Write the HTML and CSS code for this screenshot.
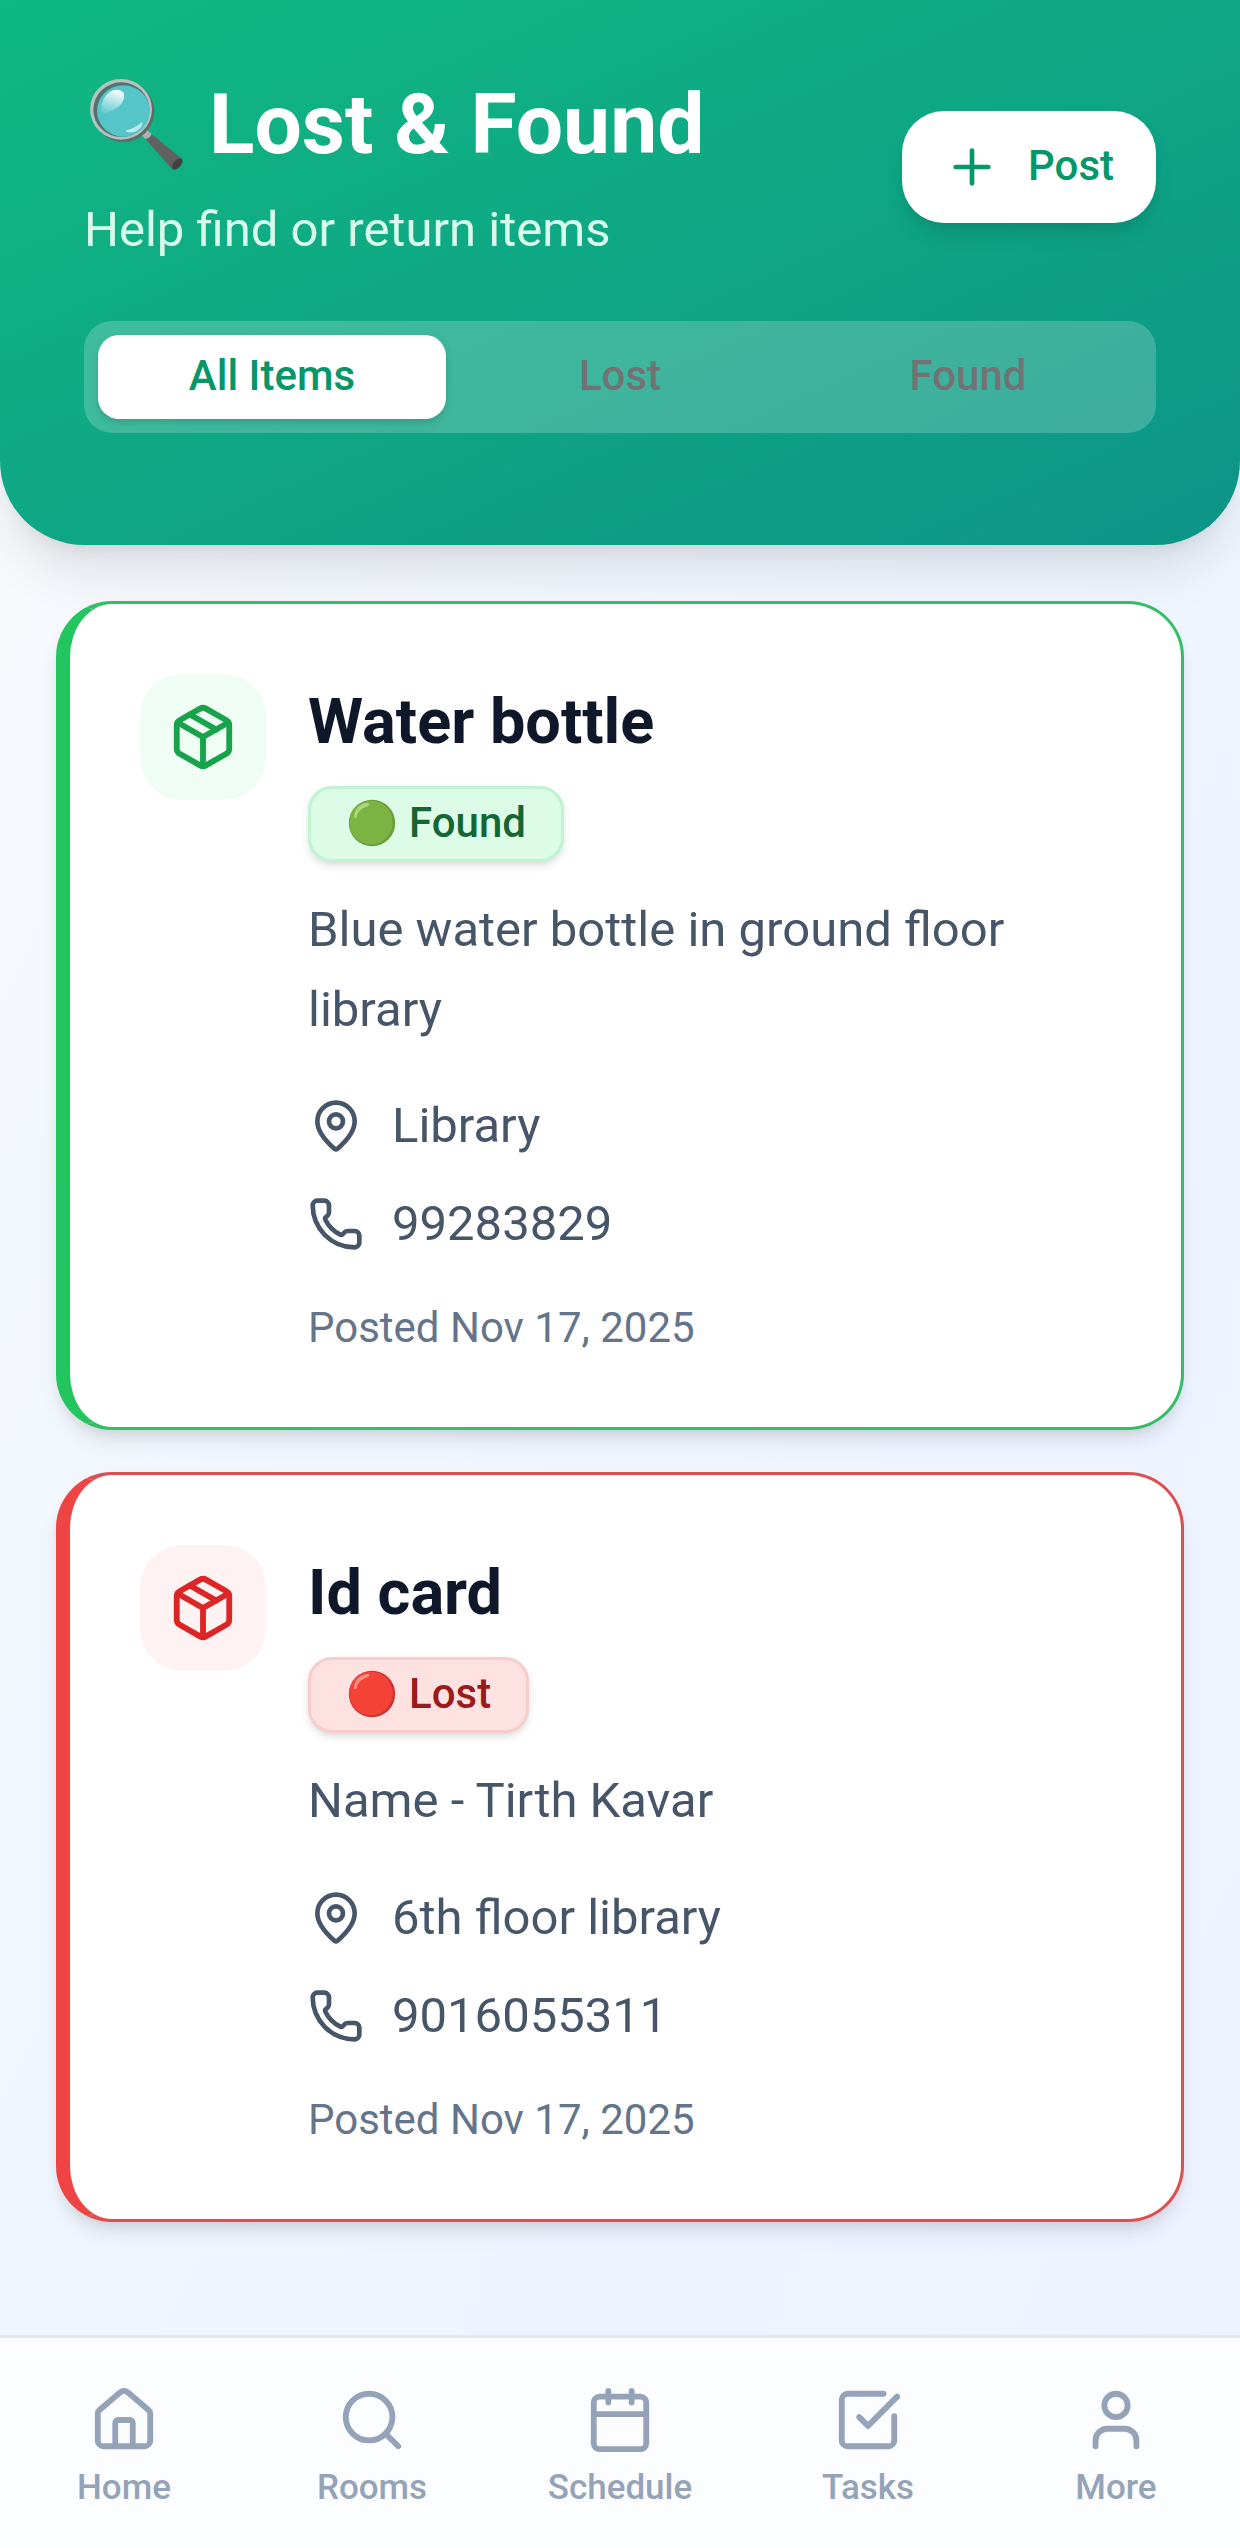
FILE: index.html
```html
<!DOCTYPE html>
<html lang="en">
<head>
<meta charset="utf-8">
<title>Lost &amp; Found</title>
<link rel="stylesheet" href="styles.css">
</head>
<body>
<svg class="sprite" aria-hidden="true">
  <symbol id="package" viewBox="0 0 24 24"><path d="M11 21.73a2 2 0 0 0 2 0l7-4A2 2 0 0 0 21 16V8a2 2 0 0 0-1-1.73l-7-4a2 2 0 0 0-2 0l-7 4A2 2 0 0 0 3 8v8a2 2 0 0 0 1 1.73z"/><path d="M12 22V12"/><path d="M3.29 7 12 12l8.71-5"/><path d="m7.5 4.27 9 5.15"/></symbol>
  <symbol id="pin" viewBox="0 0 24 24"><path d="M20 10c0 4.993-5.539 10.193-7.399 11.799a1 1 0 0 1-1.202 0C9.539 20.193 4 14.993 4 10a8 8 0 0 1 16 0"/><circle cx="12" cy="10" r="3"/></symbol>
  <symbol id="phone" viewBox="0 0 24 24"><path d="M13.832 16.568a1 1 0 0 0 1.213-.303l.355-.465A2 2 0 0 1 17 15h3a2 2 0 0 1 2 2v3a2 2 0 0 1-2 2A18 18 0 0 1 2 4a2 2 0 0 1 2-2h3a2 2 0 0 1 2 2v3a2 2 0 0 1-.8 1.6l-.468.351a1 1 0 0 0-.292 1.233 14 14 0 0 0 6.392 6.384"/></symbol>
</svg>

<div class="app">
  <header class="header">
    <div class="header-row">
      <div>
        <h1 class="title">
          <svg class="magnifier" viewBox="36 27 288 288" aria-hidden="true">
            <defs>
              <linearGradient id="shine" x1="0.6" y1="0" x2="0.3" y2="1"><stop offset="0" stop-color="#fff" stop-opacity=".95"/><stop offset="1" stop-color="#fff" stop-opacity="0"/></linearGradient>
            </defs>
            <path d="M222 194 318 273c4 8-16 34-28 32L206 211Z" fill="#616161"/>
            <ellipse cx="304" cy="288" rx="11" ry="20" transform="rotate(42 304 288)" fill="#424242"/>
            <path d="M211 185 227 197Q222 211 208 213L196 200Z" fill="#b0b0b0"/>
            <ellipse cx="142" cy="130" rx="93" ry="92" fill="#5e6b69"/>
            <ellipse cx="135" cy="124" rx="93" ry="91" fill="#b5c2bf"/>
            <ellipse cx="136" cy="125" rx="84" ry="82" fill="#56706f"/>
            <ellipse cx="142" cy="129" rx="79" ry="77" fill="#55c5ca"/>
            <path d="M77 146C68 104 92 65 122 65c24 0 29 20 15 41-15 23-45 21-60 40Z" fill="url(#shine)"/>
            <path d="M150 187c20-4 36-14 49-26 3 19-22 35-41 32-6-1-11-3-8-6Z" fill="#b9eaee"/>
          </svg>
          <span>Lost &amp; Found</span>
        </h1>
        <p class="subtitle">Help find or return items</p>
      </div>
      <button class="post">
        <svg class="icon icon-sm" viewBox="0 0 24 24"><path d="M5 12h14"/><path d="M12 5v14"/></svg>
        <span class="post-label">Post</span>
      </button>
    </div>
    <div class="tabs">
      <button class="tab tab-active">All Items</button>
      <button class="tab">Lost</button>
      <button class="tab">Found</button>
    </div>
  </header>

  <main class="list">
    <article class="card card-found">
      <div class="card-icon"><svg class="icon icon-md"><use href="#package"/></svg></div>
      <div class="card-body">
        <h2 class="card-title">Water bottle</h2>
        <span class="badge"><svg class="dot" viewBox="0 0 48 48"><circle class="dot-rim" cx="24" cy="24" r="23.200"/><circle class="dot-fill" cx="23" cy="23.500" r="21.800"/><path class="dot-shine" d="M6 17C7 9 13 4 20 4c3 1 1 3-2 4-6 2-8 5-9 9-1 3-3 3-3 0Z"/></svg>Found</span>
        <p class="desc">Blue water bottle in ground floor library</p>
        <div class="details">
          <div class="detail"><svg class="icon icon-sm"><use href="#pin"/></svg>Library</div>
          <div class="detail"><svg class="icon icon-sm"><use href="#phone"/></svg>99283829</div>
        </div>
        <p class="posted">Posted Nov 17, 2025</p>
      </div>
    </article>

    <article class="card card-lost">
      <div class="card-icon"><svg class="icon icon-md"><use href="#package"/></svg></div>
      <div class="card-body">
        <h2 class="card-title">Id card</h2>
        <span class="badge"><svg class="dot" viewBox="0 0 48 48"><circle class="dot-rim" cx="24" cy="24" r="23.200"/><circle class="dot-fill" cx="23" cy="23.500" r="21.800"/><path class="dot-shine" d="M6 17C7 9 13 4 20 4c3 1 1 3-2 4-6 2-8 5-9 9-1 3-3 3-3 0Z"/></svg>Lost</span>
        <p class="desc">Name - Tirth Kavar</p>
        <div class="details">
          <div class="detail"><svg class="icon icon-sm"><use href="#pin"/></svg>6th floor library</div>
          <div class="detail"><svg class="icon icon-sm"><use href="#phone"/></svg>9016055311</div>
        </div>
        <p class="posted">Posted Nov 17, 2025</p>
      </div>
    </article>
  </main>

  <nav class="nav">
    <a class="nav-item"><svg class="icon icon-md" viewBox="0 0 24 24"><path d="M15 21v-8a1 1 0 0 0-1-1h-4a1 1 0 0 0-1 1v8"/><path d="M3 10a2 2 0 0 1 .709-1.528l7-5.999a2 2 0 0 1 2.582 0l7 5.999A2 2 0 0 1 21 10v9a2 2 0 0 1-2 2H5a2 2 0 0 1-2-2z"/></svg>Home</a>
    <a class="nav-item"><svg class="icon icon-md" viewBox="0 0 24 24"><circle cx="11" cy="11" r="8"/><path d="m21 21-4.340-4.340"/></svg>Rooms</a>
    <a class="nav-item"><svg class="icon icon-md" viewBox="0 0 24 24"><path d="M8 2v4"/><path d="M16 2v4"/><rect width="18" height="18" x="3" y="4" rx="2"/><path d="M3 10h18"/></svg>Schedule</a>
    <a class="nav-item"><svg class="icon icon-md" viewBox="0 0 24 24"><path d="M21 10.656V19a2 2 0 0 1-2 2H5a2 2 0 0 1-2-2V5a2 2 0 0 1 2-2h12.344"/><path d="m9 11 3 3L22 4"/></svg>Tasks</a>
    <a class="nav-item"><svg class="icon icon-md" viewBox="0 0 24 24"><path d="M19 21v-2a4 4 0 0 0-4-4H9a4 4 0 0 0-4 4v2"/><circle cx="12" cy="7" r="4"/></svg>More</a>
  </nav>
</div>
</body>
</html>
```
FILE: styles.css
```css
* { box-sizing: border-box; }
body, h1, h2, p { margin: 0; }
body { font-family: Roboto, "Liberation Sans", sans-serif; }
button { border: 0; font: inherit; }
.sprite { display: none; }

.app {
  display: flex;
  flex-direction: column;
  height: 2548px;
  background: linear-gradient(to bottom right, #f8fafc 0%, #eff6ff 50%, #eef2ff 100%);
}

.icon { flex: none; fill: none; stroke: currentColor; stroke-width: 2; stroke-linecap: round; stroke-linejoin: round; }
.icon-sm { width: 56px; height: 56px; }
.icon-md { width: 70px; height: 70px; }

.header {
  padding: 69px 84px 112px;
  border-radius: 0 0 84px 84px;
  background: linear-gradient(to bottom right, #10b981, #0d9488);
  box-shadow: 0 35px 52px -10px rgb(0 0 0 / .1), 0 14px 21px -14px rgb(0 0 0 / .1);
}
.header-row { display: flex; align-items: center; justify-content: space-between; margin-bottom: 56px; }
.title { display: flex; align-items: center; height: 112px; color: #fff; font-size: 84px; line-height: 112px; font-weight: 700; }
.magnifier { width: 96px; height: 96px; margin: 0 25px 0 4px; }
.subtitle { margin-top: 14px; color: #d9fbec; font-size: 49px; line-height: 70px; }
.post {
  display: flex; align-items: center; gap: 28px;
  height: 112px; padding: 0 42px; border-radius: 42px;
  background: #fff; color: #059669; font-size: 42px; font-weight: 500;
  box-shadow: 0 14px 21px -4px rgb(0 0 0 / .1), 0 7px 14px -7px rgb(0 0 0 / .1);
}
.post-label { padding-bottom: 4px; }

.tabs { display: grid; grid-template-columns: repeat(3, 1fr); height: 112px; padding: 14px; border-radius: 28px; background: rgb(255 255 255 / .2); }
.tab { padding: 0 0 2px; border-radius: 21px; background: none; color: #737373; font-size: 42px; line-height: 56px; font-weight: 500; }
.tab-active { background: #fff; color: #059669; box-shadow: 0 4px 10px rgb(0 0 0 / .1), 0 4px 7px -4px rgb(0 0 0 / .1); }

.list { flex: 1; display: flex; flex-direction: column; gap: 42px; padding: 56px 56px 0; }
.card {
  display: flex; gap: 42px; padding: 70px;
  border: 3px solid var(--line); border-left: 14px solid var(--accent); border-radius: 56px;
  background: #fff;
  box-shadow: 0 14px 21px -4px rgb(0 0 0 / .1), 0 7px 14px -7px rgb(0 0 0 / .1);
}
.card-found { --accent: #22c55e; --line: #33bd66; --tint: #f0fdf4; --ink: #16a34a; --badge: #dcfce7; --badge-line: #bff3d1; --badge-ink: #166534; --dot: #7cb342; --dot-rim: #689f38; --dot-shine: #aed581; }
.card-lost { --accent: #ef4444; --line: #dd4e50; --tint: #fef2f2; --ink: #dc2626; --badge: #fee2e2; --badge-line: #f9cccc; --badge-ink: #991b1b; --dot: #f44336; --dot-rim: #c33; --dot-shine: #ff8a80; }
.card-icon { flex: none; align-self: flex-start; padding: 28px; border-radius: 42px; background: var(--tint); color: var(--ink); }
.card-icon .icon { display: block; }
.card-body { flex: 1; display: flex; flex-direction: column; align-items: flex-start; }
.card-title { margin-bottom: 16px; color: #0f172a; font-size: 63px; line-height: 96px; font-weight: 700; }
.badge {
  display: flex; align-items: center; padding: 6px 35px 8px; margin-bottom: 28px;
  border: 3px solid var(--badge-line); border-radius: 24px; background: var(--badge); color: var(--badge-ink);
  font-size: 42px; line-height: 56px; font-weight: 500;
  box-shadow: 0 4px 10px rgb(0 0 0 / .1), 0 4px 7px -4px rgb(0 0 0 / .1);
}
.dot { width: 48px; height: 48px; margin: 0 13px 0 2px; }
.dot-rim { fill: var(--dot-rim); }
.dot-fill { fill: var(--dot); }
.dot-shine { fill: var(--dot-shine); }
.desc { margin-bottom: 42px; color: #475569; font-size: 49px; line-height: 79.6px; }
.details { display: flex; flex-direction: column; gap: 28px; margin-bottom: 42px; }
.detail { display: flex; align-items: center; gap: 28px; color: #475569; font-size: 49px; line-height: 70px; }
.posted { margin-bottom: 2px; color: #64748b; font-size: 42px; line-height: 54px; }

.nav { display: grid; grid-template-columns: repeat(5, 1fr); height: 213px; padding-top: 47px; border-top: 3px solid #e2e8f0; background: #fcfdff; }
.nav-item { display: flex; flex-direction: column; align-items: center; gap: 7px; color: #94a3b8; font-size: 35px; line-height: 52px; font-weight: 500; }
```
